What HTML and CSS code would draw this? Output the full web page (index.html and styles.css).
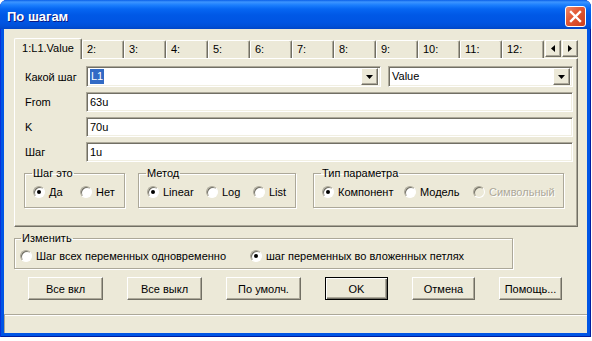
FILE: index.html
```html
<!DOCTYPE html>
<html lang="ru">
<head>
    <meta charset="UTF-8">
    <title>По шагам</title>
    <link rel="stylesheet" href="styles.css">
</head>
<body>
    <div class="window">
        <div class="titlebar">
            <span class="title">По шагам</span>
            <button class="close" aria-label="Закрыть">
                <svg width="13" height="13" viewBox="0 0 13 13"><path d="M2 2 L11 11 M11 2 L2 11" stroke="#fff" stroke-width="2.4" stroke-linecap="square"/></svg>
            </button>
        </div>
        <div class="client">
            <div class="tabctl">
                <div class="tabstrip">
                    <div class="tab active">1:L1.Value</div>
                    <div class="tab">2:</div>
                    <div class="tab">3:</div>
                    <div class="tab">4:</div>
                    <div class="tab">5:</div>
                    <div class="tab">6:</div>
                    <div class="tab">7:</div>
                    <div class="tab">8:</div>
                    <div class="tab">9:</div>
                    <div class="tab">10:</div>
                    <div class="tab">11:</div>
                    <div class="tab">12:</div>
                    <div class="spin">
                        <span class="btn3d spinbtn"><svg width="4" height="7" viewBox="0 0 4 7"><polygon points="4,0 4,7 0,3.5"/></svg></span>
                        <span class="btn3d spinbtn"><svg width="4" height="7" viewBox="0 0 4 7"><polygon points="0,0 0,7 4,3.5"/></svg></span>
                    </div>
                </div>
                <div class="panel">
                    <div class="row first">
                        <span class="lbl">Какой шаг</span>
                        <div class="sunken combo wide">
                            <span class="val"><span class="sel">L1</span></span>
                            <span class="btn3d drop"><svg width="7" height="4" viewBox="0 0 7 4"><polygon points="0,0 7,0 3.5,4"/></svg></span>
                        </div>
                        <div class="sunken combo">
                            <span class="val">Value</span>
                            <span class="btn3d drop"><svg width="7" height="4" viewBox="0 0 7 4"><polygon points="0,0 7,0 3.5,4"/></svg></span>
                        </div>
                    </div>
                    <div class="row">
                        <span class="lbl">From</span>
                        <div class="sunken field">63u</div>
                    </div>
                    <div class="row">
                        <span class="lbl">K</span>
                        <div class="sunken field">70u</div>
                    </div>
                    <div class="row">
                        <span class="lbl">Шаг</span>
                        <div class="sunken field">1u</div>
                    </div>
                    <div class="groups">
                        <fieldset class="group g-step">
                            <legend>Шаг это</legend>
                            <div class="opts">
                                <label class="opt"><span class="radio on"></span>Да</label>
                                <label class="opt"><span class="radio"></span>Нет</label>
                            </div>
                        </fieldset>
                        <fieldset class="group g-method">
                            <legend>Метод</legend>
                            <div class="opts">
                                <label class="opt"><span class="radio on"></span>Linear</label>
                                <label class="opt"><span class="radio"></span>Log</label>
                                <label class="opt"><span class="radio"></span>List</label>
                            </div>
                        </fieldset>
                        <fieldset class="group g-type">
                            <legend>Тип параметра</legend>
                            <div class="opts">
                                <label class="opt"><span class="radio on"></span>Компонент</label>
                                <label class="opt"><span class="radio"></span>Модель</label>
                                <label class="opt disabled"><span class="radio"></span>Символьный</label>
                            </div>
                        </fieldset>
                    </div>
                </div>
            </div>
            <fieldset class="group g-change">
                <legend>Изменить</legend>
                <div class="opts">
                    <label class="opt"><span class="radio"></span>Шаг всех переменных одновременно</label>
                    <label class="opt"><span class="radio on"></span>шаг переменных во вложенных петлях</label>
                </div>
            </fieldset>
            <div class="buttons">
                <button class="btn3d cmd">Все вкл</button>
                <button class="btn3d cmd">Все выкл</button>
                <button class="btn3d cmd">По умолч.</button>
                <button class="btn3d cmd small default">OK</button>
                <button class="btn3d cmd small">Отмена</button>
                <button class="btn3d cmd small">Помощь...</button>
            </div>
            <div class="status"></div>
        </div>
    </div>
</body>
</html>
```

FILE: styles.css
```css
body {
    margin: 0;
    background: #fff;
    font-family: "Liberation Sans", Arial, sans-serif;
    font-size: 11px;
    color: #000;
}

.window {
    width: 591px;
    height: 337px;
    display: flex;
    flex-direction: column;
    background: #0055e5;
    border-radius: 7px 7px 0 0;
    box-shadow: inset 1px 0 #0831d9, inset -1px 0 #001ea0, inset 0 -1px #001ea0;
    overflow: hidden;
}

/* title bar */
.titlebar {
    height: 29px;
    flex: none;
    box-sizing: border-box;
    padding: 4px 5px 0 7px;
    display: flex;
    align-items: center;
    justify-content: space-between;
    background: linear-gradient(to bottom, #0a5fe8 0, #3d95ff 2px, #1c7ffd 5px, #0666f2 9px, #0058e6 15px, #0055e3 22px, #0050d8 26px, #0046c8 29px);
}

.title {
    color: #fff;
    font-weight: bold;
    font-size: 13px;
    text-shadow: 1px 1px #0a1883;
}

.close {
    width: 21px;
    height: 21px;
    padding: 0;
    border: 1px solid #fff;
    border-radius: 3px;
    background: linear-gradient(135deg, #f08a6b 0%, #e35a36 40%, #cc3e1c 100%);
    display: flex;
    align-items: center;
    justify-content: center;
}

.client {
    flex: 1;
    margin: 0 4px 4px;
    background: #ece9d8;
    display: flex;
    flex-direction: column;
}

/* shared 3d looks */
.btn3d {
    box-sizing: border-box;
    background: #ece9d8;
    border: 1px solid;
    border-color: #fff #716f64 #716f64 #fff;
    box-shadow: inset -1px -1px #aca899;
}

.sunken {
    box-sizing: border-box;
    background: #fff;
    border: 1px solid;
    border-color: #aca899 #fff #fff #aca899;
    box-shadow: inset 1px 1px #716f64, inset -1px -1px #f1efe2;
}

/* tabs */
.tabctl {
    margin: 9px 9px 0 10px;
}

.tabstrip {
    height: 20px;
    display: flex;
    align-items: flex-end;
}

.tab {
    width: 42px;
    height: 18px;
    box-sizing: border-box;
    padding: 1px 0 0 4px;
    line-height: 15px;
    border: 1px solid;
    border-bottom: none;
    border-color: #fff #716f64 #fff #fff;
    border-radius: 2px 2px 0 0;
    box-shadow: inset -1px 0 #aca899;
}

.tab.active {
    width: 68px;
    height: 21px;
    margin-bottom: -1px;
    padding: 0;
    line-height: 19px;
    text-align: center;
    background: #ece9d8;
    position: relative;
    z-index: 1;
}

.spin {
    margin-left: auto;
    align-self: flex-start;
    margin-top: 2px;
    display: flex;
}

.spinbtn {
    width: 16px;
    height: 17px;
    display: flex;
    align-items: center;
    justify-content: center;
    margin-left: 1px;
}

.panel {
    height: 169px;
    box-sizing: border-box;
    border: 1px solid;
    border-color: #fff #716f64 #716f64 #fff;
    box-shadow: inset -1px -1px #aca899;
    padding: 7px 4px 0 10px;
}

.row {
    height: 20px;
    display: flex;
    align-items: center;
    margin-bottom: 5px;
}

.row.first {
    height: 21px;
}

.lbl {
    width: 61px;
    flex: none;
}

.field {
    flex: 1;
    height: 20px;
    line-height: 18px;
    padding-left: 3px;
}

.combo {
    height: 21px;
    flex: 1;
    margin-left: 7px;
    display: flex;
    align-items: center;
    padding: 2px;
}

.combo.wide {
    flex: none;
    width: 295px;
    margin-left: 0;
}

.combo .val {
    flex: 1;
    padding-left: 1px;
    line-height: 15px;
}

.sel {
    background: #316ac5;
    color: #fff;
    padding: 0 1px;
    display: inline-block;
}

.drop {
    width: 17px;
    height: 17px;
    display: flex;
    align-items: center;
    justify-content: center;
}

/* group boxes */
.groups {
    display: flex;
    margin: 5px 0 0 -1px;
}

.group {
    margin: 0;
    min-width: 0;
    padding: 6px 0 9px 8px;
    border: 1px solid #aca899;
    box-shadow: inset 1px 1px #fff, 1px 1px #fff;
    box-sizing: border-box;
}

.group legend {
    padding: 0 1px;
    margin-left: -1px;
    line-height: 13px;
}

.g-step { width: 101px; flex: none; }
.g-method { width: 158px; flex: none; margin-left: 13px; }
.g-type { width: 251px; flex: none; margin-left: 17px; }

.opts {
    display: flex;
    align-items: center;
}

.opt {
    display: flex;
    flex: none;
    align-items: center;
    gap: 4px;
    white-space: nowrap;
}

.g-step .opt { width: 47px; }
.g-method .opt:nth-child(1) { width: 59px; }
.g-method .opt:nth-child(2) { width: 47px; }
.g-type .opt:nth-child(1) { width: 82px; }
.g-type .opt:nth-child(2) { width: 69px; }

.radio {
    width: 12px;
    height: 12px;
    flex: none;
    box-sizing: border-box;
    border-radius: 50%;
    background: #fff;
    border: 1px solid;
    border-color: #aca899 #fff #fff #aca899;
    box-shadow: inset 1px 1px #716f64;
    display: flex;
    align-items: center;
    justify-content: center;
}

.radio.on::after {
    content: "";
    width: 4px;
    height: 4px;
    border-radius: 50%;
    background: #000;
}

.opt.disabled {
    color: #aca899;
    text-shadow: 1px 1px #fff;
}

.opt.disabled .radio {
    background: #ece9d8;
}

.g-change {
    width: 499px;
    margin: 5px 0 0 10px;
    padding: 5px 0 6px 5px;
}

.g-change legend {
    margin-left: 1px;
}

.g-change .opt:nth-child(1) { width: 230px; }

/* command buttons */
.buttons {
    display: flex;
    gap: 24px;
    padding-left: 24px;
    margin-top: 8px;
}

.cmd {
    width: 75px;
    height: 23px;
    padding: 0;
    font-family: inherit;
    font-size: 11px;
    color: #000;
}

.cmd.small {
    width: 63px;
}

.cmd.default {
    border: 1px solid #000;
    box-shadow: inset 1px 1px #fff, inset -1px -1px #716f64, inset -2px -2px #aca899;
}

.status {
    margin-top: auto;
    height: 18px;
    border-top: 1px solid #aca899;
    border-left: 1px solid #aca899;
    box-shadow: inset 0 1px #fff;
}
```
